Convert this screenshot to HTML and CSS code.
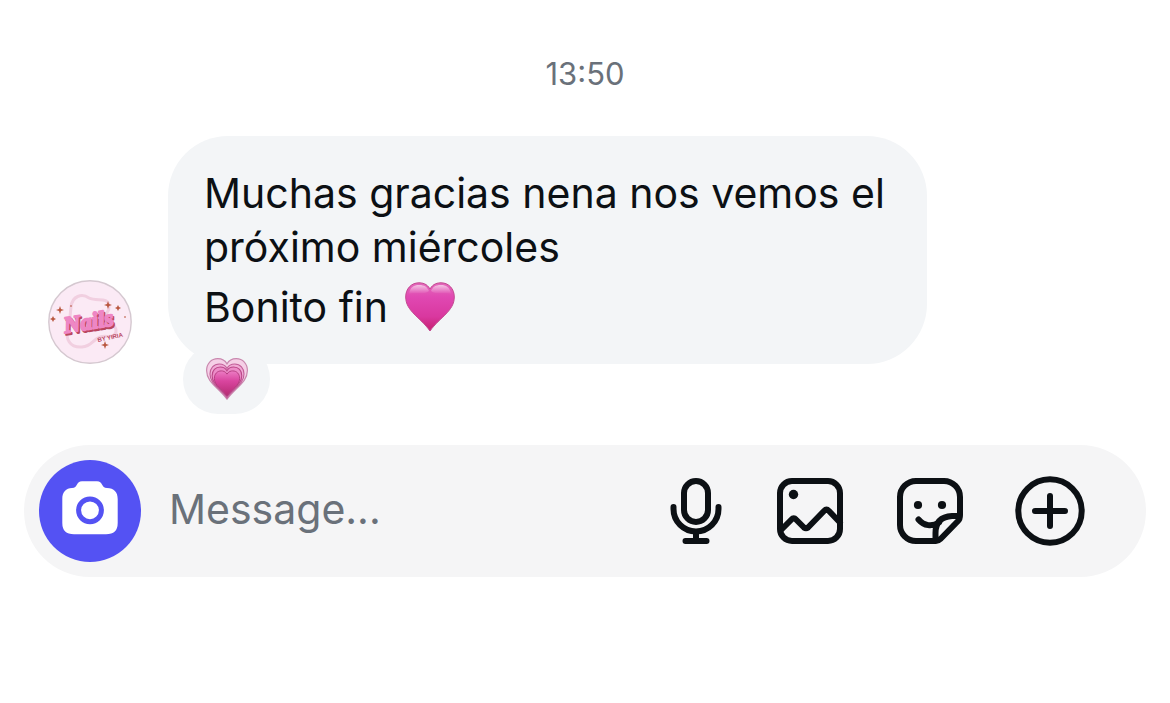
FILE: index.html
```html
<!DOCTYPE html>
<html lang="es">
<head>
<meta charset="utf-8">
<meta name="viewport" content="width=device-width, initial-scale=1">
<title>Chat</title>
<link rel="stylesheet" href="styles.css">
</head>
<body>
<main class="chat">
  <time class="stamp" datetime="13:50">13:50</time>

  <article class="message">
    <svg class="avatar" viewBox="0 0 84 84" role="img" aria-label="Nails by Yiria">
      <circle cx="42" cy="42" r="41.2" fill="#fbeaf5" stroke="#d5c8d0" stroke-width="1.4"/>
      <path d="M23 27C24 16 34 13 41 18C49 22 60 16 61 26C62 33 55 34 58 39C62 45 69 45 68 52C66 59 58 55 52 57C44 60 44 66 34 67C22 68 17 59 20 49C22 41 22 36 23 27Z" fill="none" stroke="#f1cfe0" stroke-width="3"/>
      <g transform="rotate(-9 42 44)" class="logo-name">
        <text x="17" y="51" fill="#b9475f" stroke="#b9475f">Nails</text>
        <text x="16" y="49" fill="#ee86c4" stroke="#ee86c4">Nails</text>
      </g>
      <text x="50" y="62" class="logo-by" transform="rotate(-12 50 62)">BY YIRIA</text>
      <path fill="#b9573f" d="M12 26l1 3 3 1-3 1-1 3-1-3-3-1 3-1zM5 36l1 2 2 1-2 1-1 2-1-2-2-1 2-1zM60 21l1 3 3 1-3 1-1 3-1-3-3-1 3-1zM70 25l1 2 2 1-2 1-1 2-1-2-2-1 2-1zM57 61l1 3 3 1-3 1-1 3-1-3-3-1 3-1zM77 36l1 1-1 1-1-1zM23 25l1 1-1 1-1-1z"/>
    </svg>
    <div class="bubble">
      <p class="line">Muchas gracias nena nos vemos el próximo miércoles</p>
      <p class="line line-emoji">Bonito fin
        <svg class="heart" viewBox="0 0 50 50" role="img" aria-label="Corazón rosa">
          <defs>
            <linearGradient id="pink" x1="0" y1="0" x2="0" y2="1">
              <stop offset="0" stop-color="#e36abb"/>
              <stop offset=".3" stop-color="#e048b2"/>
              <stop offset=".7" stop-color="#d9389f"/>
              <stop offset="1" stop-color="#c52070"/>
            </linearGradient>
            <linearGradient id="deep" x1="0" y1="0" x2="0" y2="1">
              <stop offset="0" stop-color="#ec7cc4"/>
              <stop offset=".4" stop-color="#d9459f"/>
              <stop offset="1" stop-color="#b52a72"/>
            </linearGradient>
            <linearGradient id="shine" x1="0" y1="0" x2="0" y2="1">
              <stop offset="0" stop-color="#fff" stop-opacity=".6"/>
              <stop offset="1" stop-color="#fff" stop-opacity="0"/>
            </linearGradient>
          </defs>
          <path d="M25 7C22 1.500 17 .8 14 .8C6 .8 .7 7 .7 15C.7 29 15 35 25 49C35 35 49.3 29 49.3 15C49.3 7 44 .8 36 .8C33 .8 28 1.500 25 7Z" fill="url(#pink)" stroke="#c34a91"/>
          <path d="M4 12C5 5 9 3 14 3C20 3 22 5 24 9C20 13 8 10 4 12ZM26 9C28 5 30 3 36 3C41 3 45 5 46 12C42 10 30 13 26 9Z" fill="url(#shine)"/>
        </svg>
      </p>
      <button class="reaction" type="button" aria-label="Reacción: corazón creciente">
        <svg class="reaction-heart" viewBox="0 0 42 42" aria-hidden="true">
          <defs>
            <path id="h" d="M25 7C22 1.500 17 .8 14 .8C6 .8 .7 7 .7 15C.7 29 15 35 25 49C35 35 49.3 29 49.3 15C49.3 7 44 .8 36 .8C33 .8 28 1.500 25 7Z"/>
          </defs>
          <use href="#h" transform="scale(.84)" fill="#f5cfe6" stroke="#c987ae" stroke-width="1.4"/>
          <use href="#h" transform="translate(3.500 5.500) scale(.7)" fill="#f1aad6" stroke="#c25f99" stroke-width="1.6"/>
          <use href="#h" transform="translate(5.700 8.500) scale(.61)" fill="#ec8cc8" stroke="#bb4788" stroke-width="1.8"/>
          <use href="#h" transform="translate(8 12.500) scale(.52)" fill="url(#deep)" stroke="#b23a7d" stroke-width="1.8"/>
        </svg>
      </button>
    </div>
  </article>

  <form class="composer">
    <button class="camera" type="button" aria-label="Camera">
      <svg class="camera-icon" viewBox="0 0 56 54" aria-hidden="true">
        <path fill="#fff" d="M20 .3H35C41 .3 39 7 45 7C52 7 55.7 11 55.7 18V42Q55.7 53.3 44 53.3H12Q.3 53.3 .3 42V18C.3 11 4 7 10 7C16 7 14 .3 20 .3Z"/>
        <circle cx="28" cy="29.3" r="11.4" fill="none" stroke="#5452f3" stroke-width="5"/>
      </svg>
    </button>
    <input class="field" type="text" placeholder="Message..." aria-label="Message">
    <div class="tools">
      <button class="tool" type="button" aria-label="Voice message">
        <svg class="icon icon-mic" viewBox="0 0 60 72" aria-hidden="true">
          <rect x="18" y="6" width="24" height="41" rx="12"/>
          <path d="M7.5 32v2a22.5 22.5 0 0 0 45 0v-2M30 57v9M19.5 66h21"/>
        </svg>
      </button>
      <button class="tool" type="button" aria-label="Photo">
        <svg class="icon" viewBox="0 0 72 72" aria-hidden="true">
          <rect x="6" y="6" width="60" height="60" rx="12"/>
          <path d="M7 55L17.5 44.5Q19.7 42 22 44.5L30 52.5Q32 54 34 52.5L50 36Q52.5 33.5 55 36L66 47.5"/>
          <circle class="dot" cx="19.5" cy="19.5" r="4.7"/>
        </svg>
      </button>
      <button class="tool" type="button" aria-label="Sticker">
        <svg class="icon" viewBox="0 0 72 72" aria-hidden="true">
          <path d="M66 40V22A16 16 0 0 0 50 6H22A16 16 0 0 0 6 22V50A16 16 0 0 0 22 66H42Q44.5 66 46.5 64L64 46Q66 44 66 40ZM65 41H58Q41.5 42 41.5 58V65M24.5 44.5C30 51 38 52 45 47.5"/>
          <circle class="dot" cx="24" cy="30" r="4.1"/>
          <circle class="dot" cx="48" cy="30" r="4.1"/>
        </svg>
      </button>
      <button class="tool" type="button" aria-label="More">
        <svg class="icon" viewBox="0 0 72 72" aria-hidden="true">
          <circle cx="36" cy="36" r="31.7"/>
          <path d="M36 21v30M21 36h30"/>
        </svg>
      </button>
    </div>
  </form>
</main>
</body>
</html>
```
FILE: styles.css
```css
* {
  box-sizing: border-box;
}

body {
  margin: 0;
  background: #fff;
  color: #0c1014;
  font-family: Inter, "Liberation Sans", sans-serif;
}

button {
  padding: 0;
  border: 0;
  background: none;
  cursor: pointer;
}

svg {
  display: block;
}

.chat {
  display: flex;
  flex-direction: column;
  padding: 56px 24px;
}

.stamp {
  align-self: center;
  color: #6a717a;
  font-size: 31px;
  line-height: 36px;
}

.message {
  display: flex;
  align-items: flex-end;
  gap: 36px;
  margin: 44px 24px 81px;
}

.avatar {
  flex: none;
  width: 84px;
  height: 84px;
}

.logo-name {
  font: italic 900 23px "Liberation Serif", serif;
  stroke-width: 2px;
  stroke-linejoin: round;
}

.logo-by {
  fill: #b9475f;
  font: bold 6px "Liberation Sans", sans-serif;
}

.bubble {
  position: relative;
  max-width: 759px;
  padding: 30px 36px;
  border-radius: 60px;
  background: #f3f5f7;
}

.line {
  margin: 0;
  font-size: 41px;
  line-height: 54px;
}

.line-emoji {
  display: flex;
  align-items: center;
  gap: 17px;
  padding-top: 6px;
}

.heart {
  width: 50px;
  height: 50px;
}

.reaction {
  position: absolute;
  left: 15px;
  bottom: -50px;
  display: grid;
  place-items: center;
  width: 87px;
  height: 70px;
  border-radius: 35px;
  background: #f3f5f7;
}

.reaction-heart {
  width: 42px;
  height: 42px;
}

.composer {
  display: flex;
  align-items: center;
  gap: 28px;
  padding: 15px 60px 15px 15px;
  min-height: 132px;
  border-radius: 66px;
  background: #f5f5f6;
}

.camera {
  display: grid;
  flex: none;
  place-items: center;
  width: 102px;
  height: 102px;
  padding-bottom: 6px;
  border-radius: 50%;
  background: #5452f3;
}

.camera-icon {
  width: 56px;
  height: 54px;
}

.field {
  flex: 1;
  min-width: 0;
  padding: 0 0 4px;
  border: 0;
  outline: 0;
  background: none;
  color: inherit;
  font-family: inherit;
  font-size: 41px;
  line-height: 54px;
}

.field::placeholder {
  color: #6a717a;
  opacity: 1;
}

.tools {
  display: flex;
  gap: 48px;
}

.icon {
  width: 72px;
  height: 72px;
  fill: none;
  stroke: #0c1014;
  stroke-width: 6;
  stroke-linecap: round;
  stroke-linejoin: round;
}

.icon-mic {
  width: 60px;
}

.dot {
  fill: #0c1014;
  stroke: none;
}
```
